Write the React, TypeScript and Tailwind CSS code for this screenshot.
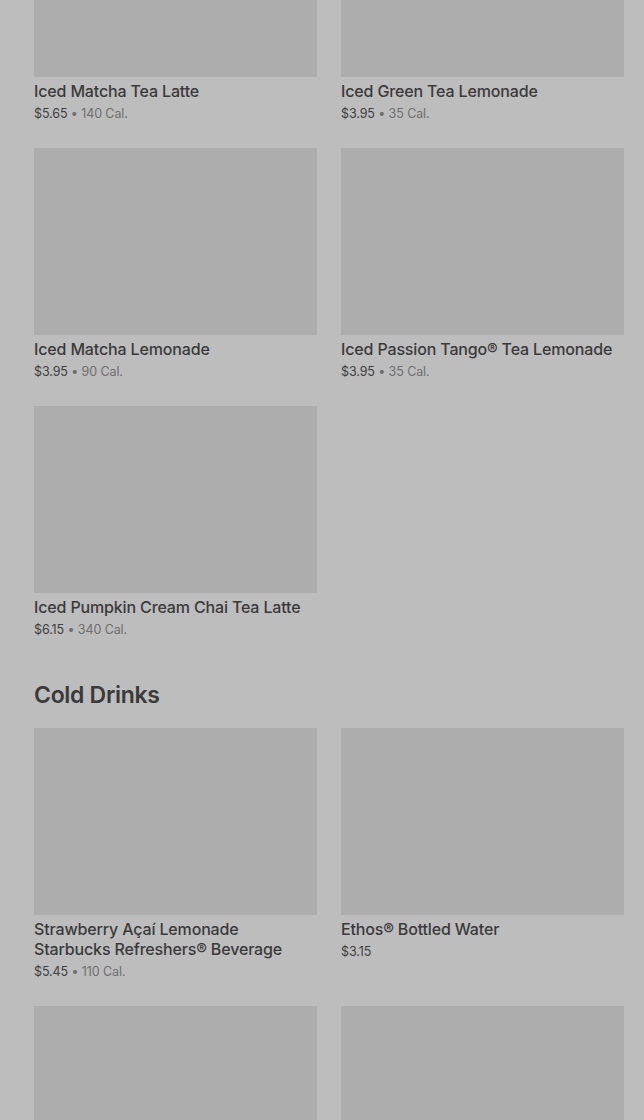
const tea = [
  { name: 'Iced Matcha Tea Latte', price: '$5.65', cal: '140 Cal.' },
  { name: 'Iced Green Tea Lemonade', price: '$3.95', cal: '35 Cal.' },
  { name: 'Iced Matcha Lemonade', price: '$3.95', cal: '90 Cal.' },
  { name: 'Iced Passion Tango® Tea Lemonade', price: '$3.95', cal: '35 Cal.' },
  { name: 'Iced Pumpkin Cream Chai Tea Latte', price: '$6.15', cal: '340 Cal.' },
]

const cold = [
  { name: 'Strawberry Açaí Lemonade Starbucks Refreshers® Beverage', price: '$5.45', cal: '110 Cal.' },
  { name: 'Ethos® Bottled Water', price: '$3.15', cal: '' },
  { name: '', price: '', cal: '' },
  { name: '', price: '', cal: '' },
]

type Item = { name: string; price: string; cal: string }

function Card({ item }: { item: Item }) {
  return (
    <div className="flex flex-col">
      <div className="h-[187px] bg-[#adadad]" />
      {item.name && (
        <p className="mt-[4px] text-[16px] leading-[20px] font-medium tracking-[-0.15px] text-[#3a3a3a]">
          {item.name}
        </p>
      )}
      {item.price && (
        <p className="mt-[3px] text-[12.5px] leading-[20px] tracking-[-0.1px] text-[#3d3d3d]">
          {item.price}
          {item.cal && (
            <span className="text-[#6e6e6e]">
              {' • '}
              {item.cal}
            </span>
          )}
        </p>
      )}
    </div>
  )
}

export default function App() {
  return (
    <div className="h-[1120px] overflow-hidden bg-[#bdbdbd] pl-[34px] pr-[20px] font-['Inter',sans-serif]">
      <div className="-mt-[110px] grid grid-cols-2 gap-x-[24px] gap-y-[24px]">
        {tea.map((t) => (
          <Card key={t.name} item={t} />
        ))}
      </div>
      <h2 className="mt-[41px] text-[23px] leading-[28px] font-semibold tracking-[-0.3px] text-[#3a3a3a]">
        Cold Drinks
      </h2>
      <div className="mt-[19px] grid grid-cols-2 gap-x-[24px] gap-y-[24px]">
        {cold.map((t, i) => (
          <Card key={i} item={t} />
        ))}
      </div>
    </div>
  )
}
